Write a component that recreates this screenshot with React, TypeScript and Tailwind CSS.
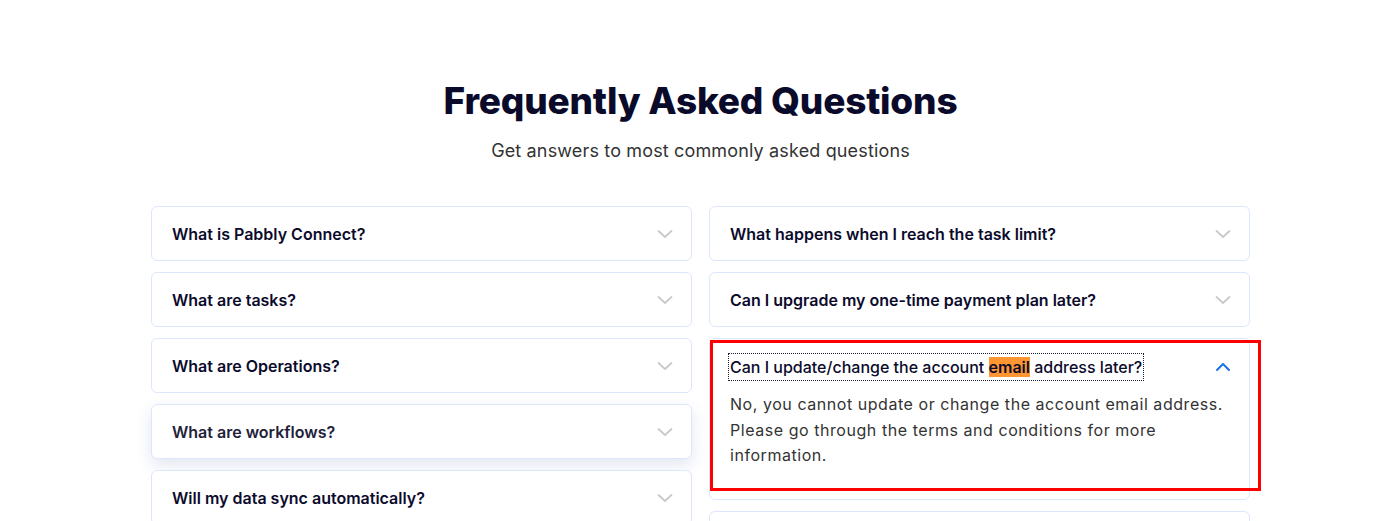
import React from 'react';

const left = [
  'What is Pabbly Connect?',
  'What are tasks?',
  'What are Operations?',
  'What are workflows?',
  'Will my data sync automatically?',
];

const right = [
  'What happens when I reach the task limit?',
  'Can I upgrade my one-time payment plan later?',
];

function Chevron({ up, className }: { up?: boolean; className: string }) {
  return (
    <svg viewBox="0 0 16 10" className={className} fill="none" stroke="currentColor" strokeWidth={up ? 2 : 1.8} strokeLinecap="round" strokeLinejoin="round">
      {up ? <path d="M2 8l6-6 6 6" /> : <path d="M1.5 2l6.5 6 6.5-6" />}
    </svg>
  );
}

function Item({ q, hover }: { q: string; hover?: boolean }) {
  return (
    <div
      className={`h-[55px] rounded-md border border-[#dde7fb] bg-white flex items-center justify-between pl-[20px] pr-[18px] ${
        hover ? 'shadow-[0_6px_16px_rgba(60,80,160,0.14)]' : ''
      }`}
    >
      <span className={`text-[16px] font-semibold ${hover ? 'text-[#22223a]' : 'text-[#0b0b2c]'}`}>{q}</span>
      <Chevron className="w-[16px] h-[10px] text-[#c9c9c9]" />
    </div>
  );
}

export default function App() {
  return (
    <div className="h-[521px] overflow-hidden bg-white pt-[78px] pl-[26px]" style={{ fontFamily: 'Inter, "Noto Sans", sans-serif' }}>
      <h1 className="text-center text-[37px] leading-[46px] font-extrabold text-[#0a0a2b] tracking-[-0.2px]">
        Frequently Asked Questions
      </h1>
      <p className="text-center text-[18px] leading-[26px] tracking-[0.15px] text-[#333] mt-[14px]">
        Get answers to most commonly asked questions
      </p>

      <div className="w-[1099px] mx-auto mt-[42px] grid grid-cols-2 gap-x-[17px] items-start">
        <div className="flex flex-col gap-[11px]">
          {left.map((q, i) => (
            <Item key={q} q={q} hover={i === 3} />
          ))}
        </div>
        <div className="flex flex-col gap-[11px]">
          {right.map((q) => (
            <Item key={q} q={q} />
          ))}
          <div className="relative rounded-md border border-[#dde7fb] bg-white">
            <div className="h-[55px] flex items-center justify-between pl-[20px] pr-[18px]">
              <span className="text-[16px] font-medium text-[#0b0b2c] outline-1 outline-dotted outline-[#1b1b3a] outline-offset-[1px]">
                Can I update/change the account <mark className="bg-[#ff9632] text-[#0b0b2c] font-semibold">email</mark> address later?
              </span>
              <Chevron up className="w-[16px] h-[10px] text-[#1a73e8]" />
            </div>
            <p className="pl-[20px] pr-[14px] pb-[30px] -mt-[2px] text-[16px] leading-[25.5px] tracking-[0.55px] text-[#333]">
              No, you cannot update or change the account email address. Please go through the terms and conditions for more information.
            </p>
            <div className="absolute left-[0px] top-[1px] w-[551px] h-[151px] border-[3px] border-[#ff0000] pointer-events-none" />
          </div>
          <div className="h-[55px] rounded-md border border-[#dde7fb] bg-white" />
        </div>
      </div>
    </div>
  );
}
